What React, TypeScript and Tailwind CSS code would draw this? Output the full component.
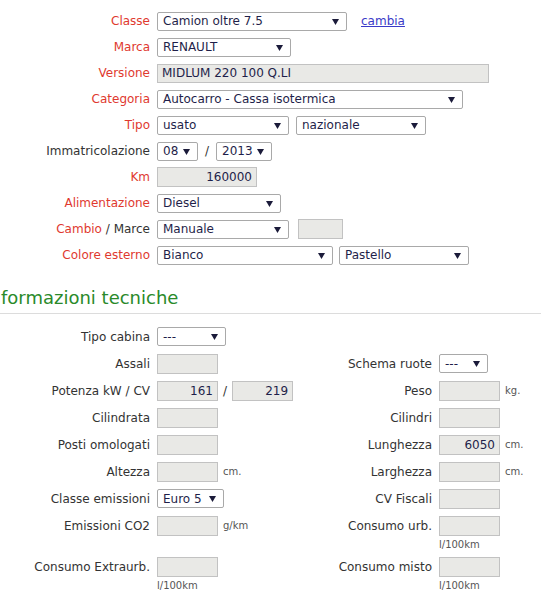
import React from 'react';

const Arrow = () => (
  <svg width="7" height="7" viewBox="0 0 7 7" className="shrink-0">
    <path d="M0 1h7L3.5 7z" fill="#1b1b3a" />
  </svg>
);

function Sel({ value, className }: { value: string; className: string }) {
  return (
    <div
      className={`flex h-[19px] items-center justify-between rounded-[2px] border border-[#a9a9a9] bg-white pl-[5px] pr-[7px] text-[12px] text-[#1f1f4a] ${className}`}
    >
      <span className="leading-none">{value}</span>
      <Arrow />
    </div>
  );
}

function Box({ value, className, right }: { value?: string; className: string; right?: boolean }) {
  return (
    <div
      className={`flex h-[20px] items-center border border-[#c2c2c2] bg-[#e9e9e6] px-[4px] text-[12px] text-[#1f1f4a] ${right ? 'justify-end' : ''} ${className}`}
    >
      {value}
    </div>
  );
}

function Row({ label, children }: { label: React.ReactNode; children: React.ReactNode }) {
  return (
    <div className="flex h-[26px] items-center">
      <div className="w-[150px] shrink-0 text-right text-[12px]">{label}</div>
      <div className="ml-[7px] flex items-center">{children}</div>
    </div>
  );
}

const red = 'text-[#e0392f]';

function TechCell({
  label,
  children,
  sub,
  labelWidth,
}: {
  label?: string;
  children?: React.ReactNode;
  sub?: string;
  labelWidth: string;
}) {
  return (
    <div className="flex items-start">
      <div className={`flex h-[27px] shrink-0 items-center justify-end text-[12px] text-[#333] ${labelWidth}`}>
        {label}
      </div>
      <div className="ml-[7px] flex flex-col">
        <div className="flex h-[27px] items-center">{children}</div>
        {sub && <div className="-mt-[1px] h-[15px] text-[10px] leading-[14px] text-[#555]">{sub}</div>}
      </div>
    </div>
  );
}

const Unit = ({ children }: { children: React.ReactNode }) => (
  <span className="ml-[5px] text-[10px] text-[#555]">{children}</span>
);

export default function App() {
  const tech: [React.ReactNode, React.ReactNode][] = [
    [
      <TechCell label="Tipo cabina" labelWidth="w-[150px]">
        <Sel value="---" className="w-[69px]" />
      </TechCell>,
      <div />,
    ],
    [
      <TechCell label="Assali" labelWidth="w-[150px]">
        <Box className="w-[61px]" />
      </TechCell>,
      <TechCell label="Schema ruote" labelWidth="w-[133px]">
        <Sel value="---" className="w-[49px]" />
      </TechCell>,
    ],
    [
      <TechCell label="Potenza kW / CV" labelWidth="w-[150px]">
        <Box value="161" right className="w-[61px]" />
        <span className="mx-[5px] text-[12px] text-[#333]">/</span>
        <Box value="219" right className="w-[61px]" />
      </TechCell>,
      <TechCell label="Peso" labelWidth="w-[133px]">
        <Box className="w-[61px]" />
        <Unit>kg.</Unit>
      </TechCell>,
    ],
    [
      <TechCell label="Cilindrata" labelWidth="w-[150px]">
        <Box className="w-[61px]" />
      </TechCell>,
      <TechCell label="Cilindri" labelWidth="w-[133px]">
        <Box className="w-[61px]" />
      </TechCell>,
    ],
    [
      <TechCell label="Posti omologati" labelWidth="w-[150px]">
        <Box className="w-[61px]" />
      </TechCell>,
      <TechCell label="Lunghezza" labelWidth="w-[133px]">
        <Box value="6050" right className="w-[61px]" />
        <Unit>cm.</Unit>
      </TechCell>,
    ],
    [
      <TechCell label="Altezza" labelWidth="w-[150px]">
        <Box className="w-[61px]" />
        <Unit>cm.</Unit>
      </TechCell>,
      <TechCell label="Larghezza" labelWidth="w-[133px]">
        <Box className="w-[61px]" />
        <Unit>cm.</Unit>
      </TechCell>,
    ],
    [
      <TechCell label="Classe emissioni" labelWidth="w-[150px]">
        <Sel value="Euro 5" className="w-[67px]" />
      </TechCell>,
      <TechCell label="CV Fiscali" labelWidth="w-[133px]">
        <Box className="w-[61px]" />
      </TechCell>,
    ],
    [
      <TechCell label="Emissioni CO2" labelWidth="w-[150px]">
        <Box className="w-[61px]" />
        <Unit>g/km</Unit>
      </TechCell>,
      <TechCell label="Consumo urb." labelWidth="w-[133px]" sub="l/100km">
        <Box className="w-[61px]" />
      </TechCell>,
    ],
    [
      <TechCell label="Consumo Extraurb." labelWidth="w-[150px]" sub="l/100km">
        <Box className="w-[61px]" />
      </TechCell>,
      <TechCell label="Consumo misto" labelWidth="w-[133px]" sub="l/100km">
        <Box className="w-[61px]" />
      </TechCell>,
    ],
  ];

  return (
    <div className="min-h-[600px] w-[553px] bg-white font-['DejaVu_Sans',Verdana,sans-serif] text-[#333]">
      <div className="pt-[8px]">
        <Row label={<span className={red}>Classe</span>}>
          <Sel value="Camion oltre 7.5" className="w-[190px]" />
          <a href="#" className="ml-[14px] text-[12px] text-[#3a3ac8] underline">
            cambia
          </a>
        </Row>
        <Row label={<span className={red}>Marca</span>}>
          <Sel value="RENAULT" className="w-[134px]" />
        </Row>
        <Row label={<span className={red}>Versione</span>}>
          <Box value="MIDLUM 220 100 Q.LI" className="w-[332px] !h-[19px]" />
        </Row>
        <Row label={<span className={red}>Categoria</span>}>
          <Sel value="Autocarro - Cassa isotermica" className="w-[306px]" />
        </Row>
        <Row label={<span className={red}>Tipo</span>}>
          <Sel value="usato" className="w-[132px]" />
          <Sel value="nazionale" className="ml-[7px] w-[130px]" />
        </Row>
        <Row label={<span className="text-[#333]">Immatricolazione</span>}>
          <Sel value="08" className="w-[41px]" />
          <span className="mx-[7px] text-[12px] text-[#333]">/</span>
          <Sel value="2013" className="w-[56px]" />
        </Row>
        <Row label={<span className={red}>Km</span>}>
          <Box value="160000" right className="w-[100px]" />
        </Row>
        <Row label={<span className={red}>Alimentazione</span>}>
          <Sel value="Diesel" className="w-[124px]" />
        </Row>
        <Row
          label={
            <>
              <span className={red}>Cambio</span> <span className="text-[#333]">/ Marce</span>
            </>
          }
        >
          <Sel value="Manuale" className="w-[132px]" />
          <Box className="ml-[9px] w-[45px]" />
        </Row>
        <Row label={<span className={red}>Colore esterno</span>}>
          <Sel value="Bianco" className="w-[176px]" />
          <Sel value="Pastello" className="ml-[6px] w-[130px]" />
        </Row>
      </div>

      <div className="mt-[20px] w-[541px] border-b border-[#dcdcdc] pb-[5px]">
        <h2 className="pl-[1px] text-[18px] leading-[20px] text-[#2a8a2a]">formazioni tecniche</h2>
      </div>

      <div className="grid grid-cols-[292px_1fr] pt-[9px]">
        {tech.map(([l, r], i) => (
          <React.Fragment key={i}>
            {l}
            <div className="ml-[7px]">{r}</div>
          </React.Fragment>
        ))}
      </div>
    </div>
  );
}
